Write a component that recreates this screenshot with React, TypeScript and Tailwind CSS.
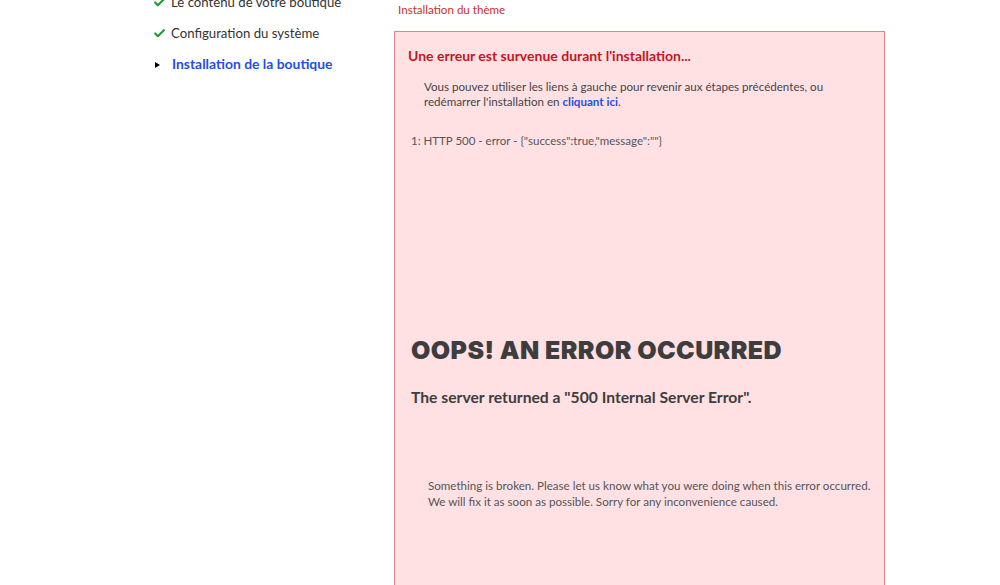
import { Check } from "lucide-react"

const etapes = [
  { label: "Le contenu de votre boutique", etat: "fait" },
  { label: "Configuration du système", etat: "fait" },
  { label: "Installation de la boutique", etat: "actif" },
]

export default function App() {
  return (
    <div className="flex h-[585px] w-[1000px] overflow-hidden bg-white font-['Lato',sans-serif] text-[#333]">
      <aside className="w-[394px] shrink-0">
        <ul className="-mt-[13px] pl-[153px]">
          {etapes.map((e) => (
            <li key={e.label} className="flex h-[31px] items-center">
              {e.etat === "fait" ? (
                <Check className="mr-[5px] h-[13px] w-[13px] text-[#1f9d3a]" strokeWidth={4} />
              ) : (
                <span className="ml-[2px] mr-[12px] h-0 w-0 border-y-[3.5px] border-l-[5px] border-y-transparent border-l-black" />
              )}
              <span
                className={
                  e.etat === "actif"
                    ? "text-[13.9px] font-bold text-[#2150e6]"
                    : "text-[13.2px] text-[#333]"
                }
              >
                {e.label}
              </span>
            </li>
          ))}
        </ul>
      </aside>

      <main className="w-[491px] shrink-0">
        <p className="mt-[2px] pl-[4px] text-[11.6px] leading-[16px] text-[#c9302c]">Installation du thème</p>

        <div className="mt-[13px] min-h-[600px] border border-[#e0868c] bg-[#ffe1e4] pl-[13px] pr-2 pt-[15px]">
          <h3 className="text-[14px] font-bold leading-[18px] text-[#c4161c]">
            Une erreur est survenue durant l'installation...
          </h3>
          <p className="mt-[14px] pl-[16px] pr-[40px] text-[11.6px] leading-[15px] text-[#444]">
            Vous pouvez utiliser les liens à gauche pour revenir aux étapes précédentes, ou redémarrer
            l'installation en{" "}
            <a href="#" className="font-bold text-[#2150e6]">
              cliquant ici
            </a>
            .
          </p>

          <p className="mt-[24px] pl-[3px] text-[11.5px] leading-[16px] text-[#555]">
            1: HTTP 500 - error - {'{"success":true,"message":""}'}
          </p>

          <div className="pl-[3px]">
            <h1 className="mt-[186px] font-['Inter',sans-serif] text-[25px] font-black leading-[30px] tracking-[0.4px] text-[#3d3d3d]">
              OOPS! AN ERROR OCCURRED
            </h1>
            <h2 className="mt-[22px] text-[15.7px] font-bold leading-[20px] text-[#3d3d3d]">
              The server returned a "500 Internal Server Error".
            </h2>
            <div className="mt-[71px] pl-[17px] text-[11.6px] leading-[15.5px] text-[#555]">
              <p>Something is broken. Please let us know what you were doing when this error occurred.</p>
              <p>We will fix it as soon as possible. Sorry for any inconvenience caused.</p>
            </div>
          </div>
        </div>
      </main>
    </div>
  )
}
